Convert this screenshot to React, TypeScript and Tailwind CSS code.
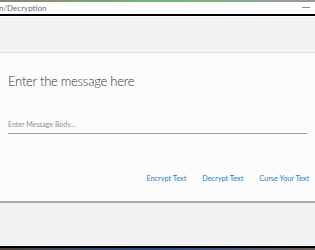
import React from 'react';

const App: React.FC = () => {
  return (
    <div className="flex h-[250px] w-full flex-col overflow-hidden bg-[#f2f1f3] font-['Lato',sans-serif]">
      {/* desktop strip */}
      <div className="h-[2px] bg-gradient-to-r from-[#8a8478] via-[#6fb57a] to-[#9a9a98]" />

      {/* title bar */}
      <div className="flex h-[12px] items-center justify-between bg-white pr-[5px]">
        <span className="-ml-[1px] text-[8px] leading-none text-[#6b6b6b]">n/Decryption</span>
        <span className="mb-[1px] h-px w-[8px] bg-[#8a8a8a]" />
      </div>
      <div className="h-[2px] bg-black" />
      <div className="h-px bg-white" />

      {/* top gray */}
      <div className="h-[35px] bg-[#f2f1f3]" />

      {/* card */}
      <div className="flex h-[151px] flex-col border-t border-[#dcdbdd] border-b-2 border-b-[#a9a9a9] bg-[#fdfcfd] pl-[8px] pr-[8px]">
        <h1 className="mt-[18px] text-[13px] font-light leading-[20px] tracking-[-0.25px] text-[#333]">
          Enter the message here
        </h1>
        <div className="mt-[18px] border-b border-[#9c9c9c]">
          <input
            className="w-full bg-transparent text-[7px] leading-[10px] text-[#333] outline-none placeholder:text-[#8c8c8c]"
            placeholder="Enter Message Body..."
          />
        </div>
        <div className="-mr-[2px] mt-[41px] flex justify-end gap-[16px]">
          <button className="text-[7.3px] leading-none text-[#1e80c0]">Encrypt Text</button>
          <button className="text-[7.3px] leading-none text-[#1e80c0]">Decrypt Text</button>
          <button className="text-[7.3px] leading-none text-[#1e80c0]">Curse Your Text</button>
        </div>
      </div>

      {/* bottom gray */}
      <div className="flex-1 bg-[#f2f1f3]" />
      <div className="h-px bg-white" />
      <div className="h-[2px] bg-black" />
      <div className="h-[2px] bg-gradient-to-r from-[#4a4038] via-[#2a4a8a] to-[#6a5a58]" />
    </div>
  );
};

export default App;
